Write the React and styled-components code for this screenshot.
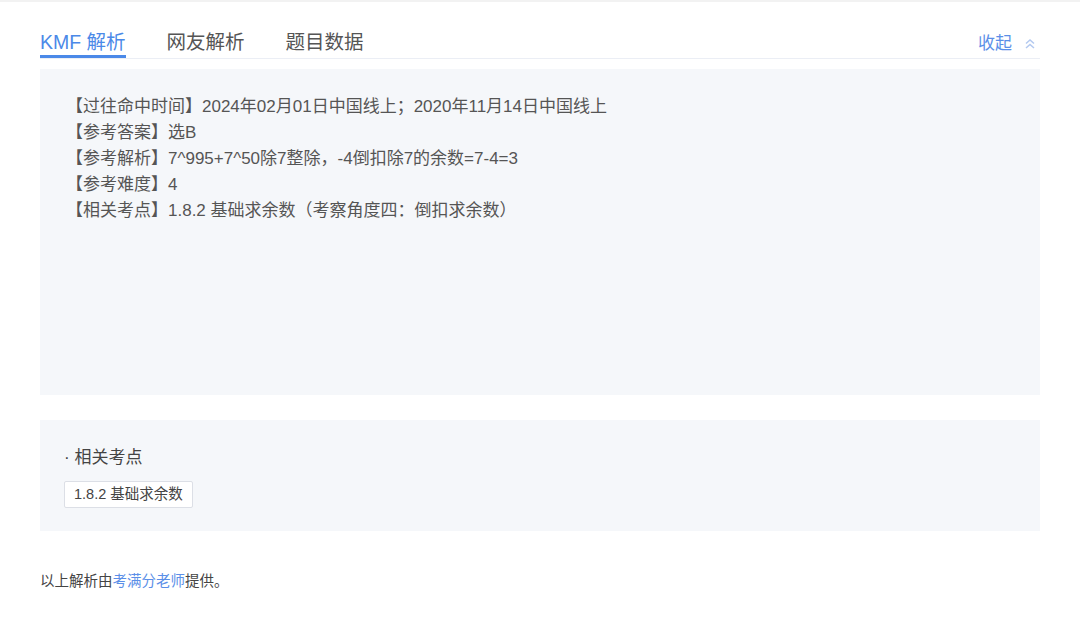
import React from "react";
import styled, { createGlobalStyle } from "styled-components";

const GlobalStyle = createGlobalStyle`
  body {
    margin: 0;
    background: #fff;
    font-family: "Liberation Sans", "Noto Sans CJK SC", sans-serif;
    color: #555;
  }
`;

const Page = styled.div`
  border-top: 2px solid #f2f2f2;
  padding: 0 40px 40px;
`;

const TabBar = styled.div`
  display: flex;
  align-items: flex-end;
  padding-top: 27px;
  border-bottom: 1px solid #ebeef5;
`;

const Tab = styled.div`
  font-size: 19.5px;
  line-height: 26px;
  margin-right: 41px;
  color: ${(p) => (p.$active ? "#4b89e8" : "#555")};
  border-bottom: 3px solid ${(p) => (p.$active ? "#4b89e8" : "transparent")};
`;

const Collapse = styled.div`
  margin-left: auto;
  display: flex;
  align-items: center;
  gap: 12px;
  font-size: 17px;
  line-height: 28px;
  padding-right: 4px;
  color: #5b8fe8;
  cursor: pointer;
`;

const Panel = styled.div`
  background: #f5f7fa;
  margin-top: ${(p) => p.$gap}px;
  padding: ${(p) => p.$pad};
  box-sizing: border-box;
  min-height: ${(p) => p.$min || 0}px;
`;

const Line = styled.div`
  font-size: 17px;
  line-height: 26px;
  color: #555;
`;

const SubTitle = styled.div`
  font-size: 17px;
  line-height: 24px;
  color: #444;
`;

const Tag = styled.span`
  display: inline-block;
  margin-top: 11px;
  height: 27px;
  line-height: 25px;
  box-sizing: border-box;
  padding: 0 9px;
  font-size: 14.5px;
  color: #444;
  background: #fff;
  border: 1px solid #dcdfe6;
  border-radius: 2px;
`;

const Footer = styled.div`
  margin-top: 40px;
  font-size: 14.5px;
  line-height: 20px;
  color: #444;
`;

const Link = styled.span`
  color: #5b8fe8;
`;

const lines = [
  "【过往命中时间】2024年02月01日中国线上；2020年11月14日中国线上",
  "【参考答案】选B",
  "【参考解析】7^995+7^50除7整除，-4倒扣除7的余数=7-4=3",
  "【参考难度】4",
  "【相关考点】1.8.2 基础求余数（考察角度四：倒扣求余数）",
];

const DoubleUp = () => (
  <svg width="12" height="12" viewBox="0 0 12 12" fill="none" stroke="#b3c9f0" strokeWidth="1.5">
    <path d="M2 5.5 L6 2 L10 5.5" />
    <path d="M2 10 L6 6.5 L10 10" />
  </svg>
);

export default function App() {
  return (
    <Page>
      <GlobalStyle />
      <TabBar>
        <Tab $active>KMF 解析</Tab>
        <Tab>网友解析</Tab>
        <Tab>题目数据</Tab>
        <Collapse>
          收起 <DoubleUp />
        </Collapse>
      </TabBar>
      <Panel $gap={10} $pad="25px 26px" $min={326}>
        {lines.map((l) => (
          <Line key={l}>{l}</Line>
        ))}
      </Panel>
      <Panel $gap={25} $pad="26px 24px 23px">
        <SubTitle>· 相关考点</SubTitle>
        <Tag>1.8.2 基础求余数</Tag>
      </Panel>
      <Footer>
        以上解析由<Link>考满分老师</Link>提供。
      </Footer>
    </Page>
  );
}
